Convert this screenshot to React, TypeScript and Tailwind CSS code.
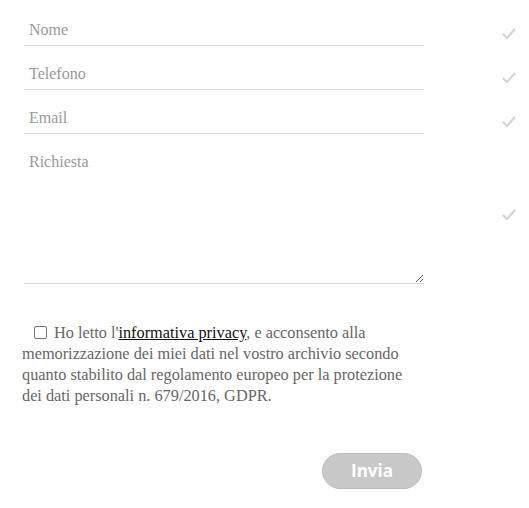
import { useState } from 'react';

const Check = () => (
  <svg width="14" height="12" viewBox="0 0 14 12" className="text-[#d4d4d4]">
    <path d="M1.5 6.5 L5 10 L12.5 1.5" fill="none" stroke="currentColor" strokeWidth="2.2" strokeLinecap="round" strokeLinejoin="round" />
  </svg>
);

const fields = ['Nome', 'Telefono', 'Email'];

export default function App() {
  const [accepted, setAccepted] = useState(false);

  return (
    <div className="w-[529px] h-[508px] bg-white pt-[2px] pl-6 font-['Liberation_Serif',serif]">
      {fields.map((f) => (
        <div key={f} className="flex">
          <div className="w-[400px] h-[44px] flex items-end">
            <input
              type="text"
              placeholder={f}
              className="w-full h-[32px] px-[5px] border-b border-[#dcdcdc] text-[16px] text-[#555] placeholder:text-[#9a9a9a] outline-none bg-transparent"
            />
          </div>
          <div className="ml-[78px] mt-[26px]">
            <Check />
          </div>
        </div>
      ))}

      <div className="flex">
        <textarea
          placeholder="Richiesta"
          className="w-[400px] h-[150px] px-[5px] pt-[18px] border-b border-[#dcdcdc] text-[16px] leading-[20px] text-[#555] placeholder:text-[#9a9a9a] outline-none bg-transparent resize-y"
        />
        <div className="ml-[78px] mt-[75px]">
          <Check />
        </div>
      </div>

      <p className="w-[400px] mt-[38px] -ml-[2px] text-[16.3px] leading-[21px] text-[#666]">
        <label className="inline">
          <input
            type="checkbox"
            checked={accepted}
            onChange={(e) => setAccepted(e.target.checked)}
            className="appearance-none w-[13px] h-[13px] ml-[12px] mr-[7px] align-[-1px] border border-[#777] rounded-[2px] bg-white"
          />
          Ho letto l'
          <a href="#" className="text-[#111] underline">
            informativa privacy
          </a>
          , e acconsento alla memorizzazione dei miei dati nel vostro archivio secondo quanto stabilito dal
          regolamento europeo per la protezione dei dati personali n. 679/2016, GDPR.
        </label>
      </p>

      <div className="w-[398px] flex justify-end mt-[47px]">
        <button className="w-[100px] h-[36px] rounded-full bg-[#c8c8c8] border border-[#bdbdbd] text-white font-bold text-[17px] font-['Open_Sans',sans-serif]">
          Invia
        </button>
      </div>
    </div>
  );
}
